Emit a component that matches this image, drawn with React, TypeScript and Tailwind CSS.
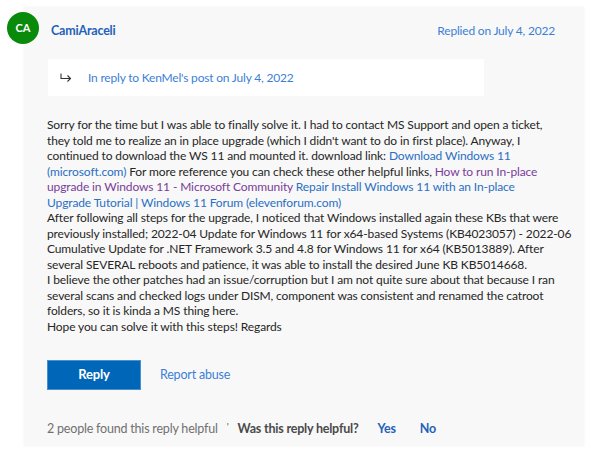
import React from "react";

const font = { fontFamily: 'Lato, "Open Sans", sans-serif' };

const Link = ({ children, visited }: { children: React.ReactNode; visited?: boolean }) => (
  <span className={visited ? "text-[#7a3d9a]" : "text-[#2a6fc4]"}>{children}</span>
);

export default function App() {
  return (
    <div className="relative w-[600px] h-[458px] bg-white overflow-hidden tracking-[-0.2px]" style={font}>
      <div className="ml-[24px] mt-[7px] w-[560px] h-[439px] bg-[#f8f8f8] shadow-[0_0_2px_rgba(0,0,0,0.06)] flex flex-col">
        {/* header */}
        <div className="flex items-center justify-between pl-[27px] pr-[29px] h-[48px] text-[12.5px]">
          <span className="font-bold text-[#1f62b8]">CamiAraceli</span>
          <span className="text-[#3c7fd6] text-[12px]">Replied on July 4, 2022</span>
        </div>

        {/* in reply to */}
        <div className="ml-[24px] mt-[4px] w-[436px] h-[37px] bg-white flex items-center pl-[12px] gap-[16px] text-[12px]">
          <svg width="12" height="10" viewBox="0 0 12 10" fill="none" stroke="#333" strokeWidth="1.1">
            <path d="M1 0.5 V5.5 H10.5" />
            <path d="M7.5 2.5 L10.5 5.5 L7.5 8.5" />
          </svg>
          <span className="text-[#3c7fd6]">In reply to KenMel's post on July 4, 2022</span>
        </div>

        {/* body */}
        <div className="mt-[21px] pl-[23px] text-[12px] tracking-[-0.12px] leading-[15.5px] text-[#262626] whitespace-nowrap">
          <div>Sorry for the time but I was able to finally solve it. I had to contact MS Support and open a ticket,</div>
          <div>they told me to realize an in place upgrade (which I didn't want to do in first place). Anyway, I</div>
          <div>
            continued to download the WS 11 and mounted it. download link: <Link>Download Windows 11</Link>
          </div>
          <div>
            <Link>(microsoft.com)</Link> For more reference you can check these other helpful links,{" "}
            <Link visited>How to run In-place</Link>
          </div>
          <div>
            <Link visited>upgrade in Windows 11 - Microsoft Community</Link>{" "}
            <Link>Repair Install Windows 11 with an In-place</Link>
          </div>
          <div>
            <Link>Upgrade Tutorial | Windows 11 Forum (elevenforum.com)</Link>
          </div>
          <div>After following all steps for the upgrade, I noticed that Windows installed again these KBs that were</div>
          <div>previously installed; 2022-04 Update for Windows 11 for x64-based Systems (KB4023057) - 2022-06</div>
          <div>Cumulative Update for .NET Framework 3.5 and 4.8 for Windows 11 for x64 (KB5013889). After</div>
          <div>several SEVERAL reboots and patience, it was able to install the desired June KB KB5014668.</div>
          <div>I believe the other patches had an issue/corruption but I am not quite sure about that because I ran</div>
          <div>several scans and checked logs under DISM, component was consistent and renamed the catroot</div>
          <div>folders, so it is kinda a MS thing here.</div>
          <div>Hope you can solve it with this steps! Regards</div>
        </div>

        {/* actions */}
        <div className="mt-[26px] pl-[23px] flex items-center gap-[19px]">
          <button className="w-[94px] h-[30px] bg-[#0067b8] border border-[#4a8fd0] text-white text-[13px] font-bold">
            Reply
          </button>
          <span className="text-[12.5px] text-[#3c7fd6]">Report abuse</span>
        </div>

        {/* footer */}
        <div className="mt-[30px] pl-[23px] flex items-center text-[12.5px]">
          <span className="text-[#707070]">2 people found this reply helpful</span>
          <span className="ml-[9px] text-[#555] text-[10px] -mt-[6px]">'</span>
          <span className="ml-[9px] font-bold text-[#4a4a4a]">Was this reply helpful?</span>
          <span className="ml-[19px] font-bold text-[#1f62b8]">Yes</span>
          <span className="ml-[24px] font-bold text-[#1f62b8]">No</span>
        </div>
      </div>

      {/* avatar overlapping card edge */}
      <div className="absolute left-[7px] top-[12px] w-[32px] h-[32px] rounded-full bg-[#0a8a0a] flex items-center justify-center text-white text-[11px] font-bold tracking-normal">
        CA
      </div>
    </div>
  );
}
